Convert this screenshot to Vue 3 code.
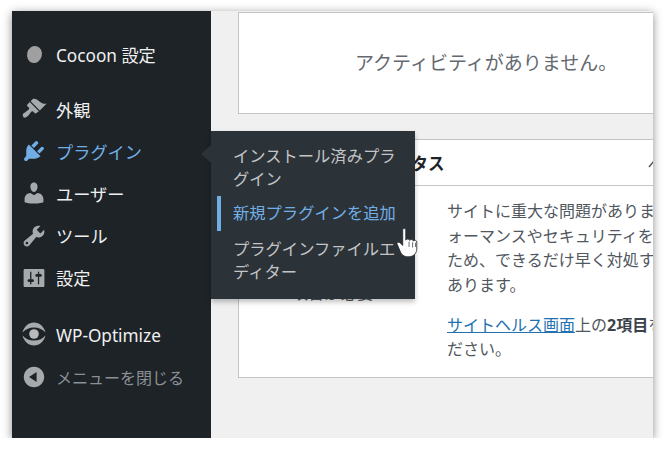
<script setup>
const groups = [
  [{ label: 'Cocoon 設定', icon: 'cocoon' }],
  [
    { label: '外観', icon: 'brush' },
    { label: 'プラグイン', icon: 'plug', active: true },
    { label: 'ユーザー', icon: 'user' },
    { label: 'ツール', icon: 'tool' },
    { label: '設定', icon: 'sliders' }
  ],
  [
    { label: 'WP-Optimize', icon: 'wpo' },
    { label: 'メニューを閉じる', icon: 'close', muted: true }
  ]
]
const paths = {
  brush: 'M14.48 11.06L7.41 3.99l1.5-1.5c.5-.56 2.3-.47 3.51.32 1.21.8 1.43 1.28 2.91 2.1 1.18.64 2.45 1.26 4.45.85zm-.71.71L6.7 4.7 4.93 6.47c-.39.39-.39 1.02 0 1.41l1.06 1.06c.39.39.39 1.03 0 1.42-.6.6-1.43 1.11-2.21 1.69-.35.26-.7.53-1.01.84C1.43 13.23.91 14.66 1.8 16.2c.9.89 2.33.37 3.66-.96.31-.31.58-.66.84-1.01.58-.78 1.09-1.61 1.69-2.21.39-.39 1.03-.39 1.42 0l1.06 1.06c.39.39 1.02.39 1.41 0z',
  plug: 'M13.11 4.36L9.87 7.6 8 5.73l3.24-3.24c.35-.34 1.05-.2 1.56.32.52.51.66 1.21.31 1.55zm-8 1.77l.91-1.12 9.01 9.01-1.19.84c-.71.71-2.63 1.16-3.82 1.16H6.14L4.9 17.26c-.59.59-1.54.59-2.12 0-.59-.58-.59-1.53 0-2.12l1.24-1.24v-3.88c0-1.13.4-3.19 1.09-3.89zm7.26 3.97l3.24-3.24c.34-.35 1.04-.21 1.55.31.52.51.66 1.21.31 1.55l-3.24 3.25z',
  user: 'M10 9.25c-2.27 0-2.73-3.44-2.73-3.44C7 4.02 7.82 2 9.97 2c2.16 0 2.98 2.02 2.71 3.81 0 0-.41 3.44-2.68 3.44zm0 2.57L12.72 10c2.39 0 4.52 2.33 4.52 4.53v2.49s-3.65 1.13-7.24 1.13c-3.65 0-7.24-1.13-7.24-1.13v-2.49c0-2.25 1.94-4.48 4.47-4.48z',
  tool: 'M16.68 9.77c-1.34 1.34-3.3 1.67-4.95.99l-5.41 6.52c-.99.99-2.59.99-3.58 0s-.99-2.59 0-3.57l6.52-5.42c-.68-1.65-.35-3.61.99-4.95 1.28-1.28 3.12-1.62 4.72-1.06l-2.89 2.89 2.82 2.82 2.86-2.87c.53 1.58.18 3.39-1.08 4.65zM3.81 16.21c.4.39 1.04.39 1.43 0 .4-.4.4-1.04 0-1.43-.39-.4-1.03-.4-1.43 0-.39.39-.39 1.03 0 1.43z',
  sliders: 'M18 16V4c0-.55-.45-1-1-1H3c-.55 0-1 .45-1 1v12c0 .55.45 1 1 1h14c.55 0 1-.45 1-1zM8 11h1c.55 0 1 .45 1 1s-.45 1-1 1H8v1.5c0 .28-.22.5-.5.5s-.5-.22-.5-.5V13H6c-.55 0-1-.45-1-1s.45-1 1-1h1V5.5c0-.28.22-.5.5-.5s.5.22.5.5V11zm5-2h-1c-.55 0-1-.45-1-1s.45-1 1-1h1V5.5c0-.28.22-.5.5-.5s.5.22.5.5V7h1c.55 0 1 .45 1 1s-.45 1-1 1h-1v5.5c0 .28-.22.5-.5.5s-.5-.22-.5-.5V9z',
  close: 'M10 2.16c4.33 0 7.84 3.51 7.84 7.84s-3.51 7.84-7.84 7.84S2.16 14.33 2.16 10 5.71 2.16 10 2.16zm2 11.72V6.12L6.18 9.97z'
}
</script>

<template>
  <div class="shell">
    <aside class="sidebar">
      <ul v-for="(group, g) in groups" :key="g" class="group">
        <li
          v-for="item in group"
          :key="item.label"
          class="item"
          :class="{ active: item.active, muted: item.muted }"
        >
          <span class="icon">
            <svg v-if="item.icon === 'cocoon'" viewBox="0 0 26 26" class="svg">
              <ellipse cx="13.5" cy="13.5" rx="7.4" ry="8.6" transform="rotate(14 13.5 13.5)" fill="#a0a0a0" />
            </svg>
            <svg v-else-if="item.icon === 'wpo'" viewBox="0 1 26 26" class="svg">
              <path d="M1.500 11.500C3 5.500 7.500 1.500 13 1.500s10 4 11.500 10c-2.500-3-6.500-5-11.500-5s-9 2-11.500 5z" fill="#a7aaad" />
              <path d="M1.500 14.500C3 20.500 7.500 24.500 13 24.500s10-4 11.500-10c-2.500 3-6.500 5-11.500 5s-9-2-11.500-5z" fill="#a7aaad" />
              <circle cx="13" cy="13" r="4.800" fill="#b8babc" />
            </svg>
            <svg v-else viewBox="0 0 20 20" class="svg">
              <path :d="paths[item.icon]" />
            </svg>
          </span>
          <span class="label">{{ item.label }}</span>
        </li>
      </ul>
    </aside>

    <main class="content">
      <section class="card activity">
        <p>アクティビティがありません。</p>
      </section>

      <section class="card health">
        <header class="health-head">
          <h2>サイトヘルスステータス</h2>
          <svg class="chevron" viewBox="0 0 12 12"><path d="M1 9l5-6 5 6" /></svg>
        </header>
        <div class="health-body">
          <div class="status">改善が必要</div>
          <div class="copy">
            <p>
              サイトに重大な問題があります。パフ<br />
              ォーマンスやセキュリティを向上させる<br />
              ため、できるだけ早く対処する必要が<br />
              あります。
            </p>
            <p>
              <a href="#">サイトヘルス画面</a>上の<b>2項目</b>を確認してく<br />
              ださい。
            </p>
          </div>
        </div>
      </section>
    </main>

    <div class="flyout">
      <span class="arrow"></span>
      <a class="fly-item">インストール済みプラグイン</a>
      <a class="fly-item current">新規プラグインを追加</a>
      <a class="fly-item">プラグインファイルエディター</a>
    </div>

    <svg class="cursor" viewBox="0 0 18 28.500" preserveAspectRatio="none">
      <path d="M5.500 2.500c0-1.300 2.500-1.300 2.500 0v10c.5-1.500 3-1.500 3.200.3.5-1.400 2.900-1.200 3 .5.7-1.100 2.800-.8 2.800 1v6.500c0 3.700-2.200 7-6 7.500-3.600.4-5.700-1.200-7-3.600L1 16.500c-.8-1.500 1.200-2.800 2.300-1.500l2.200 2.500z" fill="#fff" stroke="#1d2327" stroke-width=".7" />
      <path d="M10.700 14v5M13.600 14.500v5M16 15v4" stroke="#1d2327" stroke-width=".6" fill="none" />
    </svg>
  </div>
</template>

<style scoped>
.shell {
  position: relative;
  display: flex;
  box-sizing: border-box;
  width: 641px;
  height: 427px;
  margin: 11px 0 0 12px;
  overflow: hidden;
  background: #f0f0f1;
  box-shadow: 0 2px 9px rgba(0, 0, 0, 0.45);
  font-family: "Noto Sans", "Noto Sans CJK JP", sans-serif;
}

.sidebar {
  flex: 0 0 199px;
  padding-top: 22px;
  background: #1d2327;
}

.group {
  margin: 0 0 15px;
  padding: 0;
  list-style: none;
}

.group:first-child {
  margin-bottom: 13px;
}

.item {
  display: flex;
  align-items: center;
  height: 42.200px;
  padding-left: 9px;
  color: #f0f0f1;
  font-size: 17.200px;
}

.group:first-child .item {
  height: 42px;
}

.icon {
  flex: 0 0 26px;
  height: 26px;
  margin-right: 10px;
}

.label {
  margin-left: -1px;
  white-space: nowrap;
}

.svg {
  display: block;
  width: 26px;
  height: 26px;
  fill: #a7aaad;
}

.active {
  color: #72aee6;
}

.active .svg {
  fill: #72aee6;
}

.muted {
  color: #8c8f94;
  font-size: 16px;
}

.content {
  flex: 1;
  min-width: 0;
  padding: 1px 0 0 27px;
}

.card {
  background: #fff;
  border-top: 1px solid #c3c4c7;
  border-bottom: 1px solid #c3c4c7;
  border-left: 1px solid #c3c4c7;
  white-space: nowrap;
  overflow: hidden;
}

.activity {
  box-sizing: border-box;
  height: 102px;
  padding: 34px 0 0 116px;
}

.activity p {
  margin: 0;
  color: #646970;
  font-size: 19px;
  line-height: 32px;
}

.health {
  box-sizing: border-box;
  height: 239px;
  margin-top: 25px;
}

.health-head {
  position: relative;
  height: 45px;
  border-bottom: 1px solid #c3c4c7;
}

.health-head h2 {
  margin: 0;
  padding-left: 24px;
  color: #1d2327;
  font-size: 16.500px;
  font-weight: 700;
  line-height: 48px;
}

.chevron {
  position: absolute;
  top: 18px;
  left: 409px;
  width: 12px;
  height: 12px;
  fill: none;
  stroke: #50575e;
  stroke-width: 1.500;
}

.health-body {
  display: flex;
  padding-top: 13px;
}

.status {
  flex: 0 0 187px;
  padding-top: 81px;
  color: #50575e;
  font-size: 16.300px;
  text-align: center;
}

.copy {
  padding-left: 21px;
  color: #50575e;
  font-size: 16px;
  line-height: 24.500px;
}

.copy p {
  margin: 0 0 15.500px;
}

.copy a {
  color: #2271b1;
  text-decoration: underline;
}

.copy b {
  color: #3c434a;
  font-weight: 700;
}

.flyout {
  position: absolute;
  top: 120px;
  left: 199px;
  box-sizing: border-box;
  width: 204px;
  height: 168px;
  padding: 14px 0 0 6px;
  background: #2c3338;
  box-shadow: 0 3px 5px rgba(0, 0, 0, 0.25);
}

.arrow {
  position: absolute;
  top: 14px;
  left: -10px;
  width: 0;
  height: 0;
  border-top: 9px solid transparent;
  border-right: 10px solid #2c3338;
  border-bottom: 9px solid transparent;
}

.fly-item {
  display: block;
  box-sizing: border-box;
  width: 186px;
  padding: 0 0 0 16px;
  color: #c3c4c7;
  font-size: 16.300px;
  line-height: 23px;
  line-break: strict;
}

.fly-item + .fly-item {
  margin-top: 5px;
}

.current {
  margin-bottom: 6.500px;
  padding-top: 6px;
  padding-bottom: 6px;
  border-left: 4px solid #72aee6;
  padding-left: 12px;
  color: #72aee6;
}

.cursor {
  position: absolute;
  top: 216px;
  left: 384px;
  width: 22px;
  height: 30px;
}
</style>

<style>
body {
  margin: 0;
  background: #fff;
}
</style>
